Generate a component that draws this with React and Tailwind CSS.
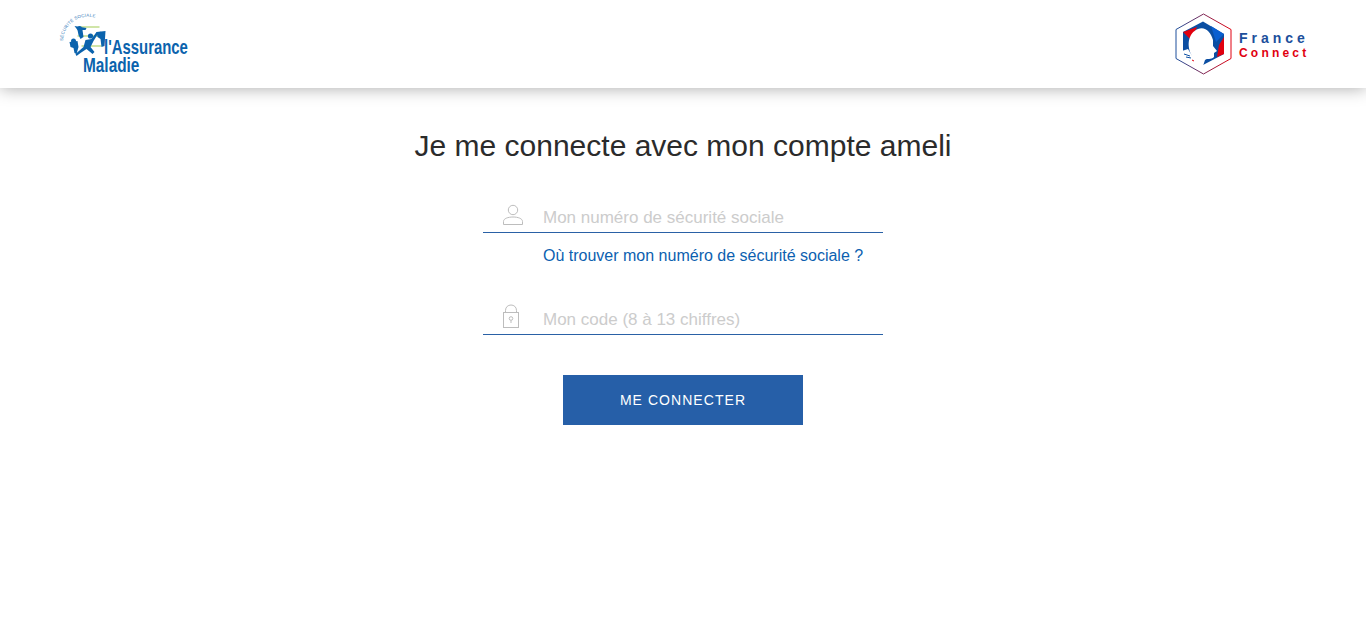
const SANS = "font-['Liberation_Sans',Arial,sans-serif]";
const LOGO_FONT = "Liberation Sans, Arial, sans-serif";

function AmeliLogo() {
  return (
    <svg width="132" height="62" viewBox="0 0 132 62" className="block">
      <defs>
        <path id="ameli-arc" d="M3.5 27 A25 25 0 0 1 38 4.5" />
      </defs>
      <g transform="translate(1.5 1)">
        <text fontFamily={LOGO_FONT} fontSize="4.4" fill="#2f78b8" letterSpacing="0.2">
          <textPath href="#ameli-arc">SÉCURITÉ SOCIALE</textPath>
        </text>
        <g stroke="#a9cf62" strokeWidth="1.1">
          <path d="M20 13 L40 13" />
          <path d="M18 22 L44 22" />
          <path d="M22 32 L42 32" />
        </g>
        <g fill="#0b63ad">
          {/* figure en haut */}
          <circle cx="20" cy="14.5" r="2.4" />
          <path d="M15 12 L27 14 L26 16 L23 16 L24 23 L21 25 L19 21 L18 16 Z" />
          {/* figure a gauche */}
          <circle cx="14" cy="27" r="2.5" />
          <path d="M10 28 L18 27 L19 33 L17 40 L15 39 L14 34 L11 33 Z" />
          {/* coureur */}
          <circle cx="31" cy="22" r="2.6" />
          <path d="M37 18 L39 19 L34 27 L31 33 L35 38 L33 40 L27 35 L21 39 L17 42 L16 40 L24 33 L26 26 L32 25 Z" />
          {/* figure a droite */}
          <circle cx="41" cy="20" r="2.3" />
          <path d="M37 18 L46 17 L45 32 L42 33 L41 25 L38 23 Z" />
        </g>
      </g>
      <text transform="translate(46 41) scale(0.71 1)" fontFamily={LOGO_FONT} fontWeight="700" fontSize="21" fill="#0b63ad">l'Assurance</text>
      <text transform="translate(25 59) scale(0.77 1)" fontFamily={LOGO_FONT} fontWeight="700" fontSize="20" fill="#0b63ad">Maladie</text>
    </svg>
  );
}

function FranceConnectLogo() {
  return (
    <svg width="134" height="62" viewBox="0 0 134 62" className="block">
      <defs>
        <linearGradient id="fc-hex" x1="0" y1="0" x2="1" y2="0">
          <stop offset="0" stopColor="#1c4f9c" />
          <stop offset="1" stopColor="#e1000f" />
        </linearGradient>
      </defs>
      <path d="M29.5 1 L57 16.5 V45.5 L29.5 61 L2 45.5 V16.5 Z" fill="none" stroke="url(#fc-hex)" strokeWidth="1" />
      <path d="M29 8.5 L50 21 V41 L29 52 L9 38 V19 Z" fill="#0b4ea2" />
      <path d="M9 19 L23 14 L17 27 Z" fill="#e1000f" />
      <path d="M37 13 L50 21 L42 29 Z" fill="#0a5fd0" />
      <path d="M50 24 V41 L43 44 L45 32 Z" fill="#e1000f" />
      <path d="M18 43 C12 33 14 20 24 16 C31 13 37 19 39 27 L39 33 L43 38 L40 40 L40 44 C37 47 33 45 31 47 L29 53 L17 47 L8 38 L14 36 Z" fill="#ffffff" />
      <path d="M10 41 L16 43 M12 44 L17 45" stroke="#0b4ea2" strokeWidth="1" />
      <path d="M18 47 L20 48" stroke="#e1000f" strokeWidth="1" />
      <text x="65" y="30" letterSpacing="4" fontFamily={LOGO_FONT} fontWeight="700" fontSize="14" fill="#1c4f9c">France</text>
      <text x="65" y="44" letterSpacing="3.2" fontFamily={LOGO_FONT} fontWeight="700" fontSize="12" fill="#e1000f">Connect</text>
    </svg>
  );
}

function UserIcon() {
  return (
    <svg width="22" height="22" viewBox="0 0 22 22" fill="none" stroke="#bdbdbd" strokeWidth="1">
      <circle cx="11" cy="6" r="4.7" />
      <path d="M1.5 20.5 V17.5 C1.5 14.5 6 13 11 13 C16 13 20.5 14.5 20.5 17.5 V20.5 Z" />
    </svg>
  );
}

function LockIcon() {
  return (
    <svg width="18" height="24" viewBox="0 0 18 24" fill="none" stroke="#bdbdbd" strokeWidth="1">
      <rect x="1.5" y="8.5" width="15" height="15" />
      <path d="M3.5 8.5 V6.5 C3.5 3 6 1 9 1 C12 1 14.5 3 14.5 6.5 V8.5" />
      <circle cx="9" cy="14.5" r="1.8" />
      <path d="M9 16.5 V19" />
    </svg>
  );
}

function Field({ icon, placeholder }) {
  return (
    <div className="flex items-end h-[31px] border-b border-b-[#2a61a6]">
      <div className="w-[60px] pl-[19px] flex items-end pb-[6px] shrink-0">{icon}</div>
      <input
        placeholder={placeholder}
        className={`flex-1 h-[30px] outline-none bg-transparent pt-[2px] text-[17px] text-[#333] placeholder:text-[#cccccc] ${SANS}`}
      />
    </div>
  );
}

export default function App() {
  return (
    <div className={`min-h-[632px] bg-white ${SANS}`}>
      <header className="h-[88px] bg-white flex items-center justify-between pl-[58px] pr-[58px] shadow-[0_0_16px_rgba(0,0,0,0.35)]">
        <AmeliLogo />
        <FranceConnectLogo />
      </header>

      <main className="flex flex-col items-center">
        <h1 className="mt-[40px] h-[36px] leading-[36px] text-[30px] font-normal text-[#2b2b2b]">
          Je me connecte avec mon compte ameli
        </h1>

        <form className="w-[400px] mt-[38px]">
          <Field icon={<UserIcon />} placeholder="Mon numéro de sécurité sociale" />
          <a href="#" className="block mt-[14px] ml-[60px] text-base leading-[18px] text-[#0c5fb0]">
            Où trouver mon numéro de sécurité sociale ?
          </a>
          <div className="mt-[39px]">
            <Field icon={<LockIcon />} placeholder="Mon code (8 à 13 chiffres)" />
          </div>
          <div className="flex justify-center mt-[40px]">
            <button type="button" className="w-[240px] h-[50px] bg-[#265fa8] text-white text-sm tracking-[1.05px] uppercase">
              Me connecter
            </button>
          </div>
        </form>
      </main>
    </div>
  );
}
